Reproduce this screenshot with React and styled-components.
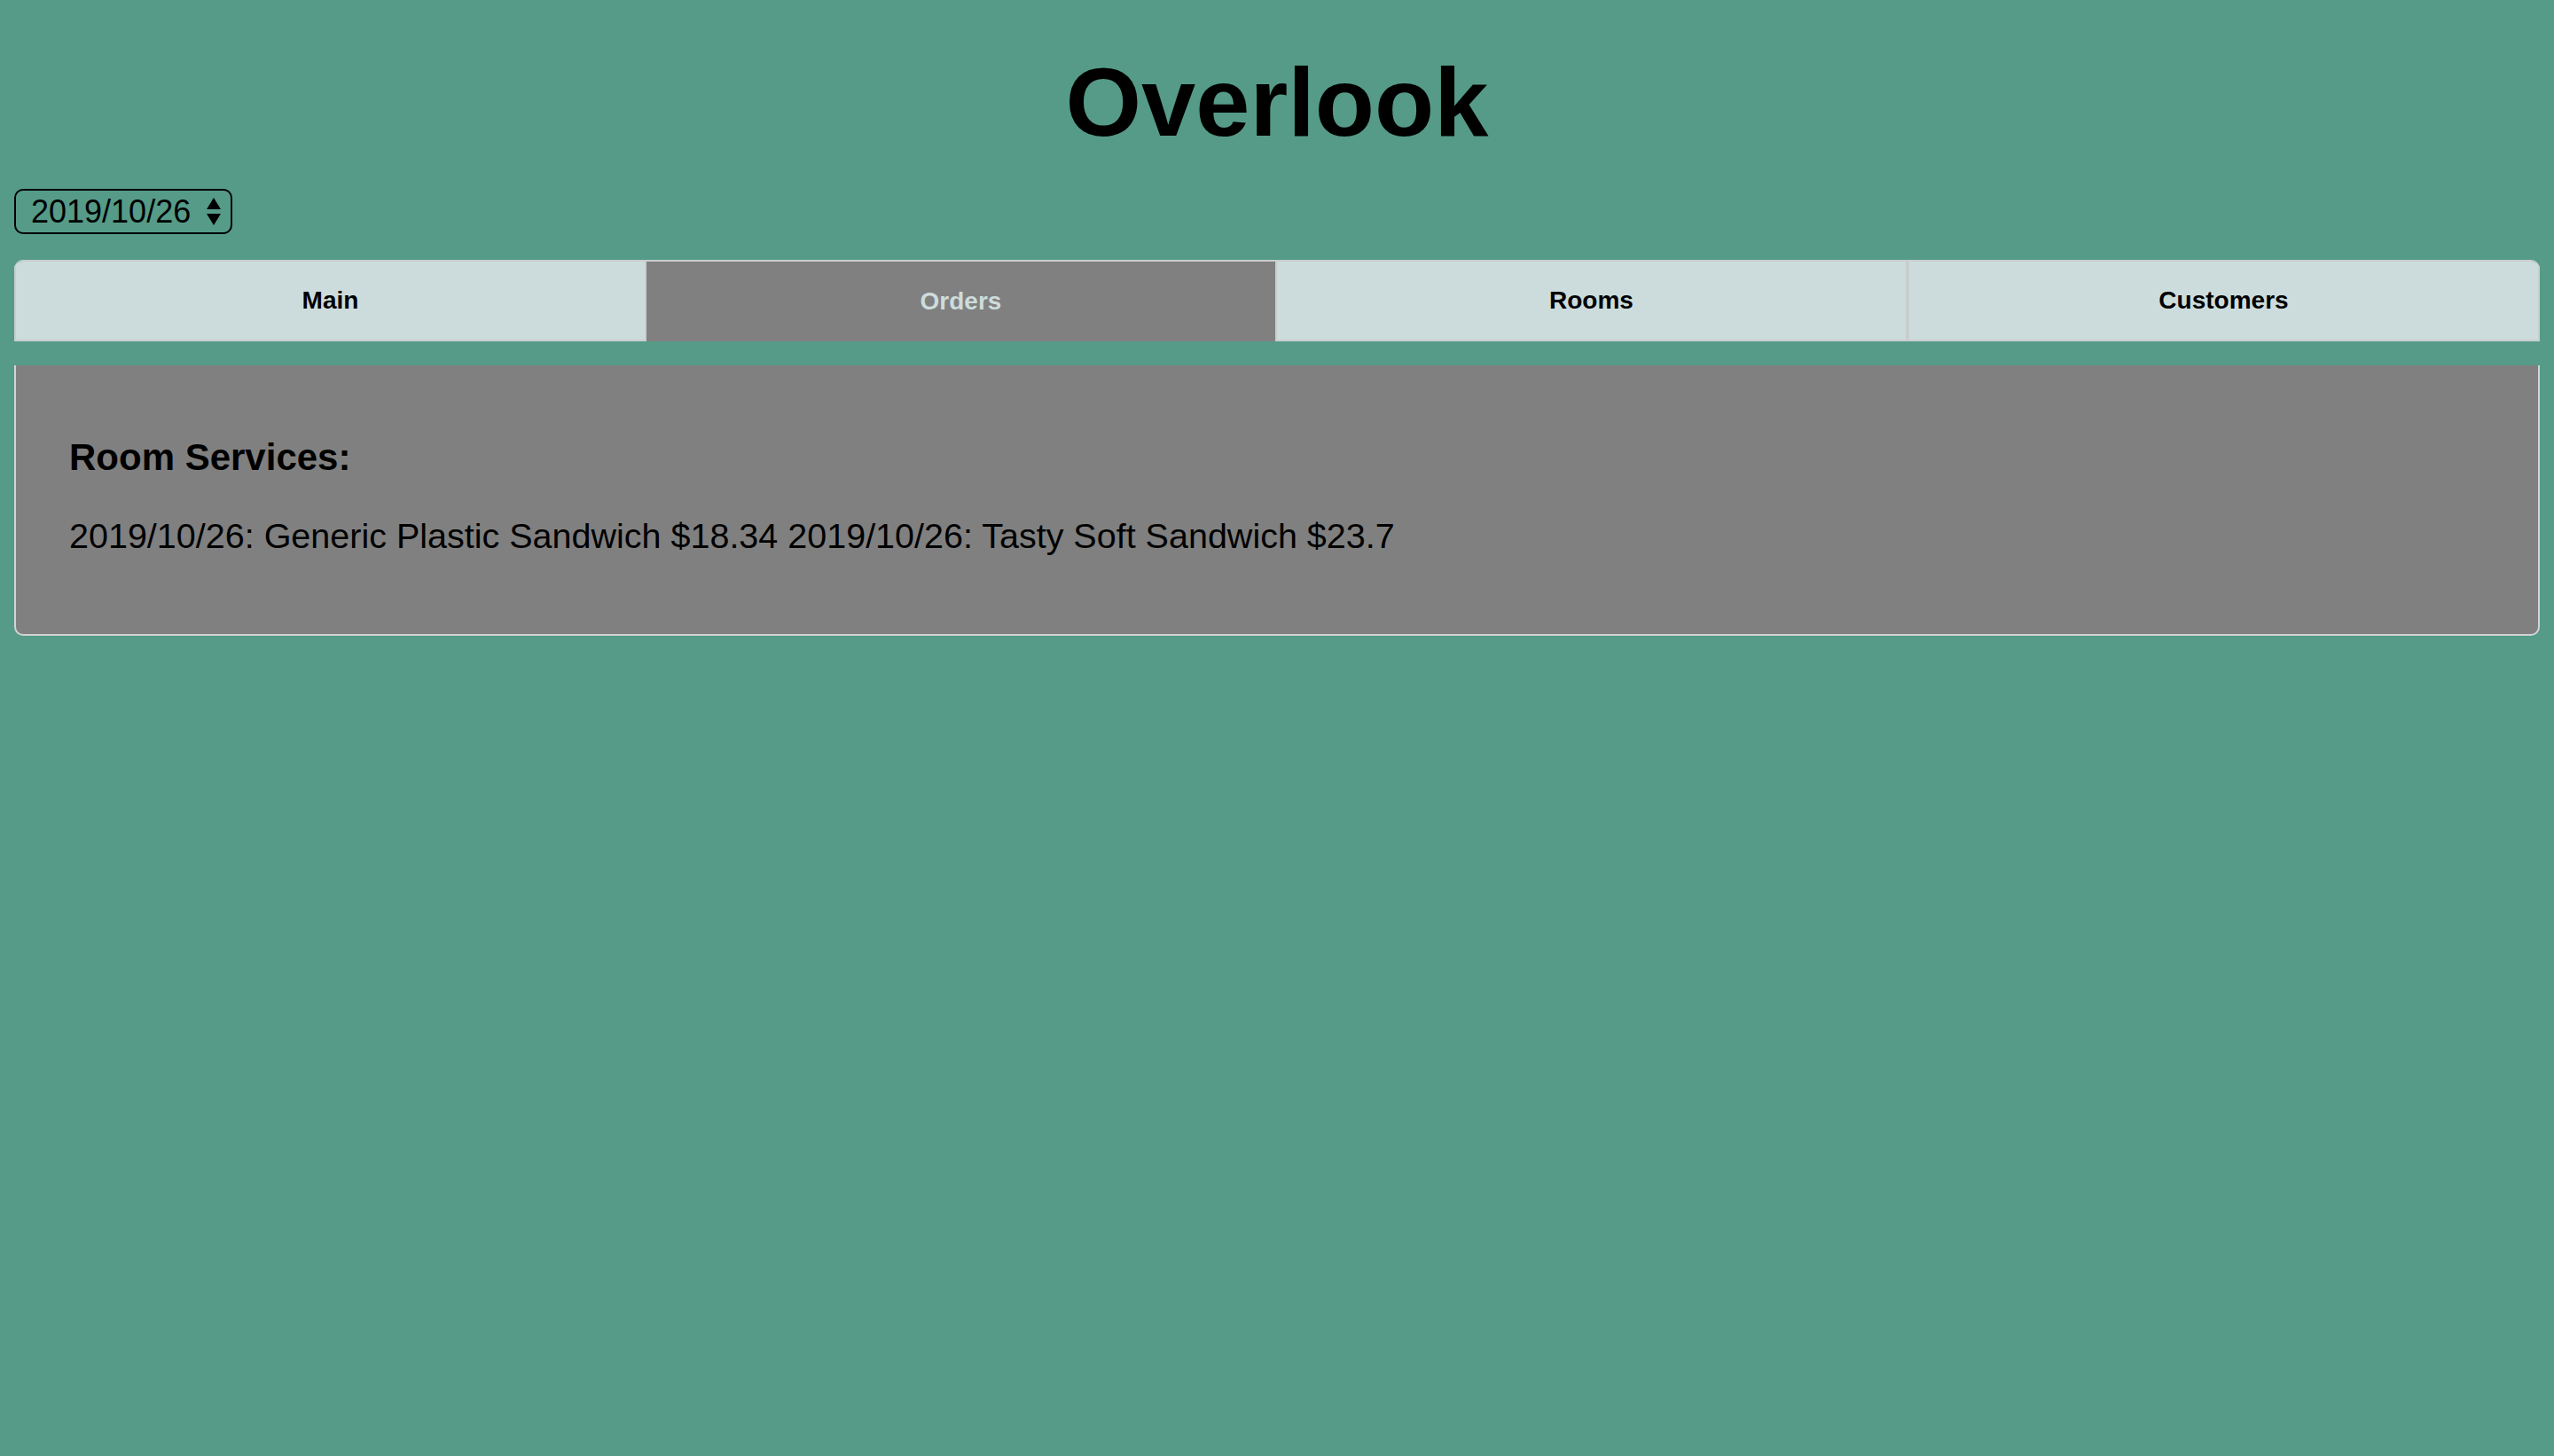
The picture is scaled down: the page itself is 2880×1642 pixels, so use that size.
import React, { useState } from 'react';
import styled, { createGlobalStyle } from 'styled-components';

const GlobalStyle = createGlobalStyle`
  html, body {
    margin: 0;
    padding: 0;
  }

  body {
    min-height: 100vh;
    padding: 16px;
    box-sizing: border-box;
    background-color: #559b88;
    font-family: "Liberation Sans", Arial, sans-serif;
    color: #000;
  }
`;

const Title = styled.h1`
  margin: 36px 0 35px;
  font-size: 110px;
  line-height: 126px;
  font-weight: 700;
  text-align: center;
`;

const DatePicker = styled.label`
  display: inline-flex;
  align-items: center;
  box-sizing: border-box;
  width: 246px;
  height: 51px;
  padding: 0 10px 0 17px;
  border: 2px solid #000;
  border-radius: 10px;

  select {
    flex: 1;
    appearance: none;
    border: none;
    background: transparent;
    padding: 0;
    font-family: inherit;
    font-size: 36px;
    color: #000;
    outline: none;
  }

  svg {
    flex: none;
    pointer-events: none;
  }
`;

const TabBar = styled.nav`
  display: flex;
  margin-top: 29px;
  border-top: 2px solid #c9cecd;
  border-radius: 10px 10px 0 0;
  overflow: hidden;
`;

const Tab = styled.button`
  flex: 1;
  height: 90px;
  padding: 0;
  border: 2px solid #c9cecd;
  border-top: none;
  border-width: ${props => (props.$active ? '0' : '0 2px 2px')};
  background-color: ${props => (props.$active ? '#808080' : '#ccdcdc')};
  color: ${props => (props.$active ? '#ccdcdc' : '#000')};
  font-family: inherit;
  font-size: 28px;
  font-weight: 700;
  cursor: pointer;
`;

const Panel = styled.section`
  margin-top: 27px;
  padding: 80px 60px 88px;
  background-color: #808080;
  border: 2px solid #d2d4d4;
  border-top: none;
  border-radius: 0 0 10px 10px;
`;

const PanelHeading = styled.h3`
  margin: 0 0 41px;
  font-size: 42px;
  line-height: 48px;
  font-weight: 700;
`;

const ServiceList = styled.p`
  margin: 0;
  font-size: 39.5px;
  line-height: 46px;
`;

const tabs = ['Main', 'Orders', 'Rooms', 'Customers'];

const orders = [
  { date: '2019/10/26', food: 'Generic Plastic Sandwich', cost: 18.34 },
  { date: '2019/10/26', food: 'Tasty Soft Sandwich', cost: 23.7 },
];

const Arrows = () => (
  <svg width="18" height="32" viewBox="0 0 18 32">
    <polygon points="9,0 17,13 1,13" fill="#000" />
    <polygon points="1,18 17,18 9,31" fill="#000" />
  </svg>
);

const App = () => {
  const [activeTab, setActiveTab] = useState('Orders');
  const [date, setDate] = useState('2019/10/26');

  return (
    <>
      <GlobalStyle />
      <Title>Overlook</Title>
      <DatePicker>
        <select value={date} onChange={e => setDate(e.target.value)}>
          <option>2019/10/26</option>
          <option>2019/10/27</option>
        </select>
        <Arrows />
      </DatePicker>
      <TabBar>
        {tabs.map(tab => (
          <Tab key={tab} $active={tab === activeTab} onClick={() => setActiveTab(tab)}>
            {tab}
          </Tab>
        ))}
      </TabBar>
      <Panel>
        <PanelHeading>Room Services:</PanelHeading>
        <ServiceList>
          {orders.map(order => `${order.date}: ${order.food} $${order.cost}`).join(' ')}
        </ServiceList>
      </Panel>
    </>
  );
};

export default App;
